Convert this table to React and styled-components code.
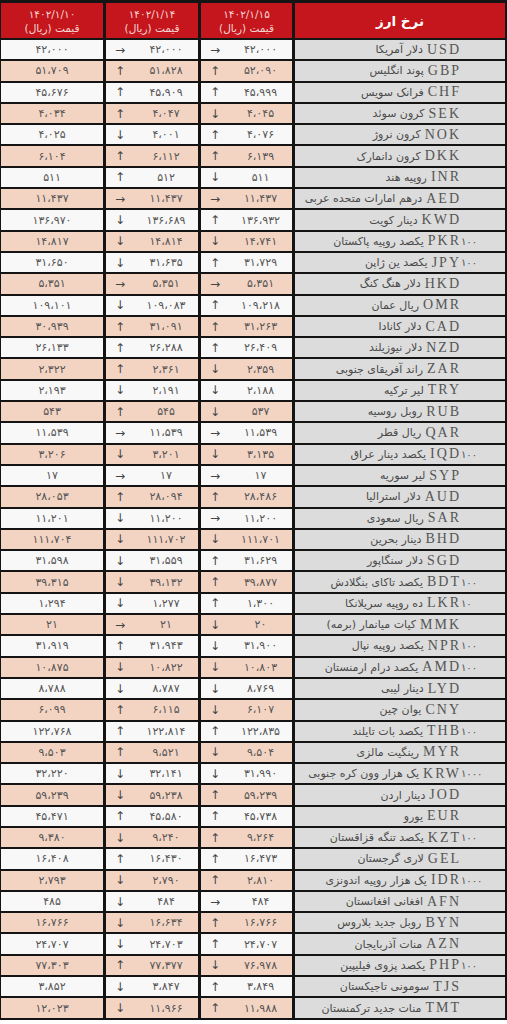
import React from "react";
import styled, { createGlobalStyle } from "styled-components";

const GlobalStyle = createGlobalStyle`
  html, body {
    margin: 0;
    padding: 0;
    background: #ffffff;
  }
`;

// [code, suffix, name, v15, a15, v14, a14, v10]
const rows = [
  ["USD", "", "دلار آمریکا", "۴۲،۰۰۰", "→", "۴۲،۰۰۰", "→", "۴۲،۰۰۰"],
  ["GBP", "", "پوند انگلیس", "۵۲،۰۹۰", "↑", "۵۱،۸۲۸", "↑", "۵۱،۷۰۹"],
  ["CHF", "", "فرانک سویس", "۴۵،۹۹۹", "↑", "۴۵،۹۰۹", "↑", "۴۵،۶۷۶"],
  ["SEK", "", "کرون سوئد", "۴،۰۴۵", "↓", "۴،۰۴۷", "↑", "۴،۰۳۴"],
  ["NOK", "", "کرون نروژ", "۴،۰۷۶", "↑", "۴،۰۰۱", "↓", "۴،۰۲۵"],
  ["DKK", "", "کرون دانمارک", "۶،۱۳۹", "↑", "۶،۱۱۲", "↑", "۶،۱۰۴"],
  ["INR", "", "روپیه هند", "۵۱۱", "↓", "۵۱۲", "↑", "۵۱۱"],
  ["AED", "", "درهم امارات متحده عربی", "۱۱،۴۳۷", "→", "۱۱،۴۳۷", "→", "۱۱،۴۳۷"],
  ["KWD", "", "دینار کویت", "۱۳۶،۹۳۲", "↑", "۱۳۶،۶۸۹", "↓", "۱۳۶،۹۷۰"],
  ["PKR", "۱۰۰", "یکصد روپیه پاکستان", "۱۴،۷۴۱", "↓", "۱۴،۸۱۴", "↓", "۱۴،۸۱۷"],
  ["JPY", "۱۰۰", "یکصد ین ژاپن", "۳۱،۷۲۹", "↑", "۳۱،۶۳۵", "↓", "۳۱،۶۵۰"],
  ["HKD", "", "دلار هنگ کنگ", "۵،۳۵۱", "→", "۵،۳۵۱", "→", "۵،۳۵۱"],
  ["OMR", "", "ریال عمان", "۱۰۹،۲۱۸", "↑", "۱۰۹،۰۸۳", "↓", "۱۰۹،۱۰۱"],
  ["CAD", "", "دلار کانادا", "۳۱،۲۶۳", "↑", "۳۱،۰۹۱", "↑", "۳۰،۹۳۹"],
  ["NZD", "", "دلار نیوزیلند", "۲۶،۴۰۹", "↑", "۲۶،۲۸۸", "↑", "۲۶،۱۳۳"],
  ["ZAR", "", "راند آفریقای جنوبی", "۲،۳۵۹", "↓", "۲،۳۶۱", "↑", "۲،۳۲۲"],
  ["TRY", "", "لیر ترکیه", "۲،۱۸۸", "↓", "۲،۱۹۱", "↓", "۲،۱۹۳"],
  ["RUB", "", "روبل روسیه", "۵۳۷", "↓", "۵۴۵", "↑", "۵۴۳"],
  ["QAR", "", "ریال قطر", "۱۱،۵۳۹", "→", "۱۱،۵۳۹", "→", "۱۱،۵۳۹"],
  ["IQD", "۱۰۰", "یکصد دینار عراق", "۳،۱۳۵", "↓", "۳،۲۰۱", "↓", "۳،۲۰۶"],
  ["SYP", "", "لیر سوریه", "۱۷", "→", "۱۷", "→", "۱۷"],
  ["AUD", "", "دلار استرالیا", "۲۸،۴۸۶", "↑", "۲۸،۰۹۴", "↑", "۲۸،۰۵۳"],
  ["SAR", "", "ریال سعودی", "۱۱،۲۰۰", "→", "۱۱،۲۰۰", "↓", "۱۱،۲۰۱"],
  ["BHD", "", "دینار بحرین", "۱۱۱،۷۰۱", "↓", "۱۱۱،۷۰۲", "↓", "۱۱۱،۷۰۴"],
  ["SGD", "", "دلار سنگاپور", "۳۱،۶۲۹", "↑", "۳۱،۵۵۹", "↓", "۳۱،۵۹۸"],
  ["BDT", "۱۰۰", "یکصد تاکای بنگلادش", "۳۹،۸۷۷", "↑", "۳۹،۱۳۲", "↓", "۳۹،۳۱۵"],
  ["LKR", "۱۰", "ده روپیه سریلانکا", "۱،۳۰۰", "↑", "۱،۲۷۷", "↓", "۱،۲۹۴"],
  ["MMK", "", "کیات میانمار (برمه)", "۲۰", "↓", "۲۱", "→", "۲۱"],
  ["NPR", "۱۰۰", "یکصد روپیه نپال", "۳۱،۹۰۰", "↓", "۳۱،۹۴۳", "↑", "۳۱،۹۱۹"],
  ["AMD", "۱۰۰", "یکصد درام ارمنستان", "۱۰،۸۰۳", "↓", "۱۰،۸۲۲", "↓", "۱۰،۸۷۵"],
  ["LYD", "", "دینار لیبی", "۸،۷۶۹", "↓", "۸،۷۸۷", "↓", "۸،۷۸۸"],
  ["CNY", "", "یوان چین", "۶،۱۰۷", "↓", "۶،۱۱۵", "↑", "۶،۰۹۹"],
  ["THB", "۱۰۰", "یکصد بات تایلند", "۱۲۲،۸۳۵", "↑", "۱۲۲،۸۱۴", "↑", "۱۲۲،۷۶۸"],
  ["MYR", "", "رینگیت مالزی", "۹،۵۰۴", "↓", "۹،۵۲۱", "↑", "۹،۵۰۳"],
  ["KRW", "۱۰۰۰", "یک هزار وون کره جنوبی", "۳۱،۹۹۰", "↓", "۳۲،۱۴۱", "↓", "۳۲،۲۲۰"],
  ["JOD", "", "دینار اردن", "۵۹،۲۳۹", "↑", "۵۹،۲۳۸", "↓", "۵۹،۲۳۹"],
  ["EUR", "", "یورو", "۴۵،۷۳۸", "↑", "۴۵،۵۸۰", "↑", "۴۵،۴۷۱"],
  ["KZT", "۱۰۰", "یکصد تنگه قزاقستان", "۹،۲۶۴", "↑", "۹،۲۴۰", "↓", "۹،۳۸۰"],
  ["GEL", "", "لاری گرجستان", "۱۶،۴۷۳", "↑", "۱۶،۴۳۰", "↑", "۱۶،۴۰۸"],
  ["IDR", "۱۰۰۰", "یک هزار روپیه اندونزی", "۲،۸۱۰", "↑", "۲،۷۹۰", "↓", "۲،۷۹۳"],
  ["AFN", "", "افغانی افغانستان", "۴۸۴", "→", "۴۸۴", "↓", "۴۸۵"],
  ["BYN", "", "روبل جدید بلاروس", "۱۶،۷۶۶", "↑", "۱۶،۶۳۴", "↓", "۱۶،۷۶۶"],
  ["AZN", "", "منات آذربایجان", "۲۴،۷۰۷", "↑", "۲۴،۷۰۳", "↓", "۲۴،۷۰۷"],
  ["PHP", "۱۰۰", "یکصد پزوی فیلیپین", "۷۶،۹۷۸", "↓", "۷۷،۳۷۷", "↑", "۷۷،۳۰۳"],
  ["TJS", "", "سومونی تاجیکستان", "۳،۸۴۹", "↑", "۳،۸۴۷", "↓", "۳،۸۵۲"],
  ["TMT", "", "منات جدید ترکمنستان", "۱۱،۹۸۸", "↑", "۱۱،۹۶۶", "↓", "۱۲،۰۲۳"],
];

export default function App() {
  return (
    <>
      <GlobalStyle />
      <Table dir="rtl">
        <Row $head>
          <HeadCell>
            <HeadTitle>نرخ ارز</HeadTitle>
          </HeadCell>
          <HeadCell>
            <HeadLine>۱۴۰۲/۱/۱۵</HeadLine>
            <HeadLine>قیمت (ریال)</HeadLine>
          </HeadCell>
          <HeadCell>
            <HeadLine>۱۴۰۲/۱/۱۴</HeadLine>
            <HeadLine>قیمت (ریال)</HeadLine>
          </HeadCell>
          <HeadCell>
            <HeadLine>۱۴۰۲/۱/۱۰</HeadLine>
            <HeadLine>قیمت (ریال)</HeadLine>
          </HeadCell>
        </Row>

        {rows.map((r, i) => (
          <Row key={r[0]}>
            <NameCell>
              <Name>{r[2]}</Name>
              <Code>{r[0]}</Code>
              <Suffix>{r[1]}</Suffix>
            </NameCell>
            <PriceCell $pink={i % 2 === 1}>
              <Arrow>{r[4]}</Arrow>
              <Num>{r[3]}</Num>
            </PriceCell>
            <PriceCell $pink={i % 2 === 1}>
              <Arrow>{r[6]}</Arrow>
              <Num>{r[5]}</Num>
            </PriceCell>
            <PriceCell $pink={i % 2 === 1}>
              <Num>{r[7]}</Num>
            </PriceCell>
          </Row>
        ))}
      </Table>
    </>
  );
}

const Table = styled.div`
  width: 507px;
  box-sizing: border-box;
  background: #141414;
  padding: 3px 2px 2px 1px;
  display: flex;
  flex-direction: column;
  gap: 2px;
`;

const Row = styled.div`
  display: grid;
  grid-template-columns: 210px 91px 92px 102px;
  column-gap: 3px;
  height: ${(p) => (p.$head ? "35px" : "19.3px")};
`;

const HeadCell = styled.div`
  background: #c5161d;
  display: flex;
  flex-direction: column;
  align-items: center;
  justify-content: center;
  font-family: "DejaVu Sans", sans-serif;
`;

const HeadTitle = styled.div`
  color: #ffffff;
  font-size: 13.5px;
  font-weight: bold;
`;

const HeadLine = styled.div`
  color: #f5d6d2;
  font-size: 10.5px;
  line-height: 14px;
`;

const NameCell = styled.div`
  background: #dcdcdc;
  display: flex;
  direction: ltr;
  justify-content: flex-end;
  align-items: center;
  padding-right: 44px;
  color: #4a4a4a;
  white-space: nowrap;
`;

const Name = styled.span`
  font-family: "DejaVu Sans", sans-serif;
  font-size: 11px;
  direction: rtl;
  margin-right: 4px;
`;

const Code = styled.span`
  font-family: "Liberation Serif", serif;
  font-size: 14px;
  letter-spacing: 2px;
  color: #555555;
`;

const Suffix = styled.span`
  display: inline-block;
  width: 0;
  overflow: visible;
  font-family: "DejaVu Sans", sans-serif;
  font-size: 10px;
  color: #505050;
`;

const PriceCell = styled.div`
  background: ${(p) => (p.$pink ? "#f3d4c3" : "#f8f8f8")};
  display: flex;
  direction: ltr;
  align-items: center;
  color: #555555;
  font-family: "DejaVu Sans", sans-serif;
`;

const Arrow = styled.span`
  width: 28px;
  text-align: center;
  font-size: 12px;
  color: #444444;
`;

const Num = styled.span`
  flex: 1;
  text-align: center;
  font-size: 11px;
`;
